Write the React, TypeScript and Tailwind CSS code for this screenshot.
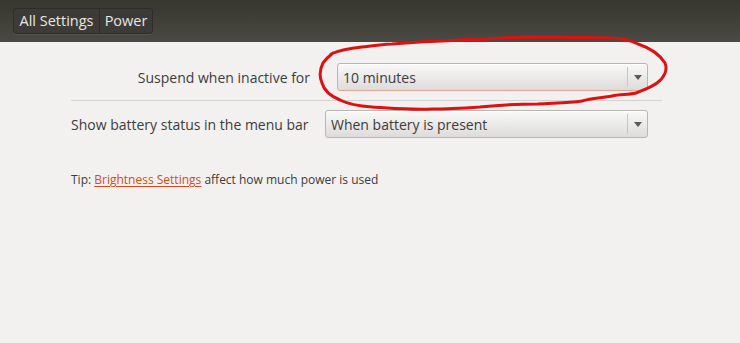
import React from 'react';

const font = { fontFamily: '"Open Sans", "DejaVu Sans", sans-serif' };

const Combo: React.FC<{ value: string; focused?: boolean; className?: string }> = ({ value, focused, className }) => (
  <div
    className={`flex h-[28px] items-stretch rounded-[3px] border bg-gradient-to-b from-[#f9f9f8] to-[#dddcda] shadow-[inset_0_1px_0_#ffffff] ${
      focused ? 'border-[#e5a594]' : 'border-[#b8b6b1]'
    } ${className ?? ''}`}
  >
    <div className="flex flex-1 items-center pl-[5px] text-[14px] text-[#3c3c3c] whitespace-nowrap">{value}</div>
    <div className="my-[3px] w-px bg-[#c9c7c3]" />
    <div className="flex w-[19px] items-center justify-center">
      <div className="h-0 w-0 border-x-[4px] border-t-[5px] border-x-transparent border-t-[#5a5a5a]" />
    </div>
  </div>
);

export default function App() {
  return (
    <div className="relative h-[343px] w-[740px] overflow-hidden bg-[#f2f1f0]" style={font}>
      <div className="flex h-[42px] items-center bg-gradient-to-b from-[#37362f] to-[#4b4943] px-[13px]">
        <div className="flex h-[26px] overflow-hidden rounded-[3px] border border-[#2e2d29] bg-[#3d3b37] text-[14.5px] text-[#e8e6e1] shadow-[0_1px_0_#57554f]">
          <button className="flex w-[86px] items-center justify-center border-r border-[#2e2d29]">All Settings</button>
          <button className="flex w-[52px] items-center justify-center">Power</button>
        </div>
      </div>

      <div className="pt-[21px]">
        <div className="flex items-center">
          <label className="w-[310px] text-right text-[14px] text-[#3c3c3c] whitespace-nowrap">
            Suspend when inactive for
          </label>
          <Combo value="10 minutes" focused className="ml-[27px] w-[311px]" />
        </div>

        <div className="ml-[71px] mt-[9px] h-px w-[591px] bg-[#d6d4d0]" />

        <div className="mt-[9px] flex items-center">
          <label className="w-[310px] pl-[71px] text-[14px] text-[#3c3c3c] whitespace-nowrap">
            Show battery status in the menu bar
          </label>
          <Combo value="When battery is present" className="ml-[15px] w-[323px]" />
        </div>

        <p className="ml-[71px] mt-[34px] text-[12px] leading-[16px] text-[#3c3c3c]">
          Tip:{' '}
          <a className="text-[#d84a1b] underline underline-offset-2" href="#">
            Brightness Settings
          </a>{' '}
          affect how much power is used
        </p>
      </div>

      {/* hand-drawn highlight around the first combo */}
      <svg className="pointer-events-none absolute left-0 top-0" width="740" height="343" viewBox="0 0 740 343">
        <path
          d="M331 54 C340 50 352 48 362 47 C375 46 384 44 392 44 L420 42 C440 41 455 41 470 39 L478 40 C490 38 505 38 522 37 C545 37 575 37 610 38 C622 38 630 40 638 44 C650 48 660 55 665 63 C668 70 664 78 657 83 C650 88 643 90 636 93 C628 95 620 94 612 96 C602 98 592 98 582 101 C568 103 552 103 538 104 C520 104 500 105 480 107 C465 108 450 109 432 109 C410 110 390 108 372 107 C358 106 348 104 340 100 C330 96 324 90 322 83 C319 76 320 69 323 63 C326 59 329 56 333 53"
          fill="none"
          stroke="#dd1111"
          strokeWidth="3"
          strokeLinejoin="round"
          strokeLinecap="round"
        />
      </svg>
    </div>
  );
}
